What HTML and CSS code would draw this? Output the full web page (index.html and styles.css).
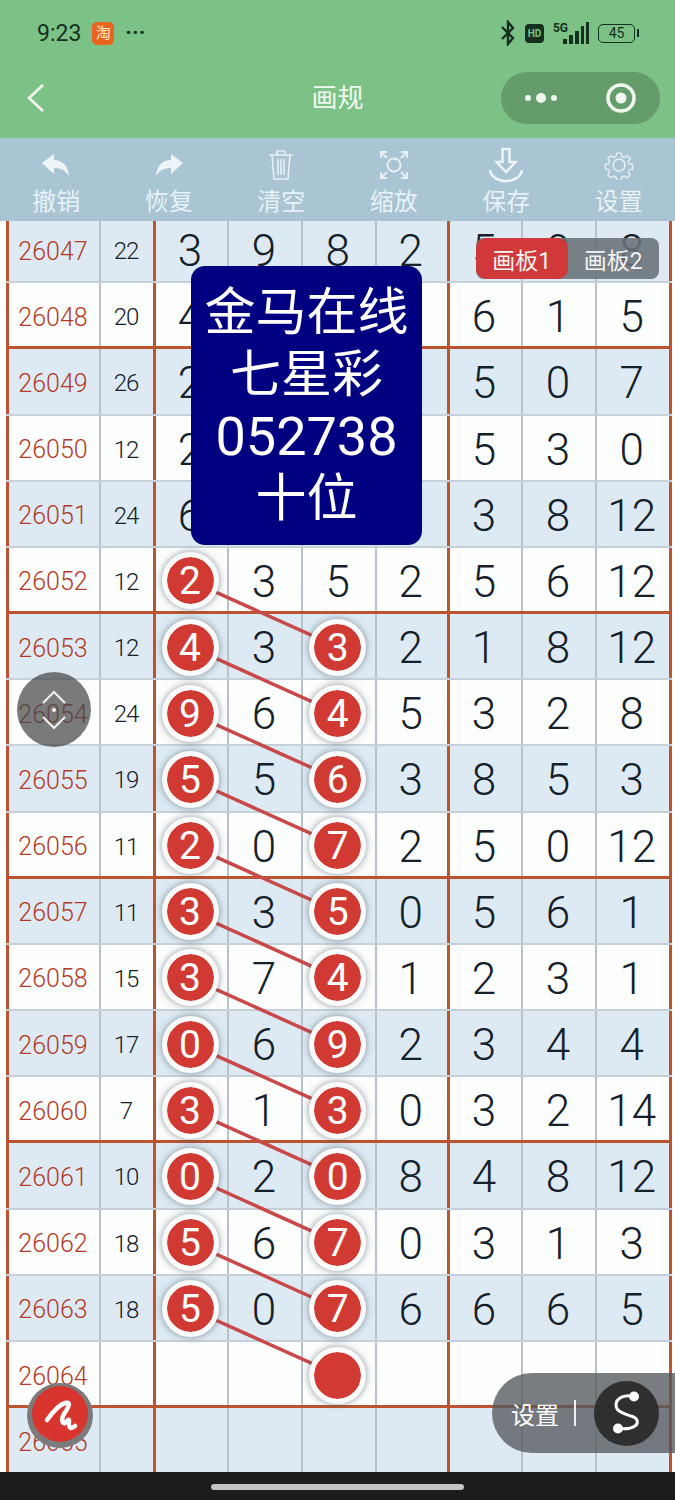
FILE: index.html
```html
<!DOCTYPE html>
<html lang="zh-CN">
<head>
    <meta charset="UTF-8">
    <meta name="viewport" content="width=device-width, initial-scale=1.0">
    <title>画规</title>
    <link rel="stylesheet" href="styles.css">
</head>
<body>

    <div class="top">
        <div class="status">
            <div class="status-left">
                <span class="time">9:23</span>
                <span class="app-badge">淘</span>
                <span class="more-dots">···</span>
            </div>
            <div class="status-right">
                <svg width="16" height="26" viewBox="0 0 16 26"><path d="M2 7l11 11-5 6V2l5 6L2 19" fill="none" stroke="#16301f" stroke-width="2.4"/></svg>
                <span class="hd">HD</span>
                <span class="net">5G</span>
                <svg class="signal" width="28" height="24" viewBox="0 0 28 24"><path d="M1 18h4v5H1zM7 14h4v9H7zM13 10h4v13h-4zM19 5h3v18h-3zM24 1h3v22h-3z" fill="#16301f"/></svg>
                <span class="battery">45</span>
            </div>
        </div>
        <div class="nav">
            <svg class="back" width="20" height="30" viewBox="0 0 20 30"><path d="M17 2L3 15l14 13" fill="none" stroke="#f4faf4" stroke-width="2.6"/></svg>
            <div class="title">画规</div>
            <div class="capsule">
                <svg width="40" height="14" viewBox="0 0 40 14"><circle cx="7" cy="7" r="3" fill="#eef6ee"/><circle cx="20" cy="7" r="5" fill="#eef6ee"/><circle cx="33" cy="7" r="3" fill="#eef6ee"/></svg>
                <svg width="32" height="32" viewBox="0 0 32 32"><circle cx="16" cy="16" r="13" fill="none" stroke="#eef6ee" stroke-width="3.6"/><circle cx="16" cy="16" r="5.5" fill="#eef6ee"/></svg>
            </div>
        </div>
    </div>

    <div class="toolbar">
        <div class="tool">
            <div class="tool-icon"><svg width="30" height="24" viewBox="0 0 30 24"><path d="M1 10L13 1v6c8 0 14 5 15 16-4-6-8-8-15-8v6z" fill="#eef5f8"/></svg></div>
            <span>撤销</span>
        </div>
        <div class="tool">
            <div class="tool-icon"><svg width="30" height="24" viewBox="0 0 30 24"><path d="M29 10L17 1v6C9 7 3 12 2 23c4-6 8-8 15-8v6z" fill="#eef5f8"/></svg></div>
            <span>恢复</span>
        </div>
        <div class="tool">
            <div class="tool-icon"><svg width="26" height="32" viewBox="0 0 26 32" fill="none" stroke="#e6f0f4" stroke-width="1.6"><path d="M1 6h24M9 6V2h8v4M4 6l2 24h14l2-24M10 10v16M13 10v16M16 10v16"/></svg></div>
            <span>清空</span>
        </div>
        <div class="tool">
            <div class="tool-icon"><svg width="30" height="30" viewBox="0 0 30 30" fill="none" stroke="#e6f0f4" stroke-width="2"><circle cx="15" cy="15" r="6.5"/><path d="M2 8V2h6M2 2l6 6M22 2h6v6M28 2l-6 6M2 22v6h6M2 28l6-6M28 22v6h-6M28 28l-6-6"/></svg></div>
            <span>缩放</span>
        </div>
        <div class="tool">
            <div class="tool-icon"><svg width="36" height="36" viewBox="0 0 36 36" fill="none" stroke="#eef5f8" stroke-width="2.4"><path d="M14.5 2h7v13h6L18 25 8.500 15h6zM2 23c1 7 8 11 16 11s15-4 16-11"/></svg></div>
            <span>保存</span>
        </div>
        <div class="tool">
            <div class="tool-icon"><svg width="30" height="30" viewBox="0 0 30 30" fill="none" stroke="#e6f0f4" stroke-width="1.5"><circle cx="15" cy="15" r="6"/><path d="M12.500 1.500h5l.8 3.800 2.600 1.100 3.300-2.100 3.500 3.500-2.100 3.300 1.100 2.600 3.800.8v5l-3.800.8-1.100 2.600 2.100 3.300-3.500 3.500-3.300-2.100-2.600 1.100-.8 3.800h-5l-.8-3.800-2.600-1.100-3.300 2.100-3.500-3.500 2.100-3.300-1.100-2.600-3.800-.8v-5l3.800-.8 1.100-2.600-2.100-3.300 3.500-3.500 3.300 2.100 2.600-1.100z" transform="translate(1.800 1.800) scale(.88)"/></svg></div>
            <span>设置</span>
        </div>
    </div>

    <div class="board">
        <div class="rows">
            <div class="row alt"><div class="cell id">26047</div><div class="cell sum">22</div><div class="cell sep">3</div><div class="cell">9</div><div class="cell">8</div><div class="cell">2</div><div class="cell sep">5</div><div class="cell">0</div><div class="cell">8</div></div>
            <div class="row major"><div class="cell id">26048</div><div class="cell sum">20</div><div class="cell sep">4</div><div class="cell"></div><div class="cell"></div><div class="cell"></div><div class="cell sep">6</div><div class="cell">1</div><div class="cell">5</div></div>
            <div class="row alt"><div class="cell id">26049</div><div class="cell sum">26</div><div class="cell sep">2</div><div class="cell"></div><div class="cell"></div><div class="cell"></div><div class="cell sep">5</div><div class="cell">0</div><div class="cell">7</div></div>
            <div class="row"><div class="cell id">26050</div><div class="cell sum">12</div><div class="cell sep">2</div><div class="cell"></div><div class="cell"></div><div class="cell"></div><div class="cell sep">5</div><div class="cell">3</div><div class="cell">0</div></div>
            <div class="row alt"><div class="cell id">26051</div><div class="cell sum">24</div><div class="cell sep">6</div><div class="cell"></div><div class="cell"></div><div class="cell"></div><div class="cell sep">3</div><div class="cell">8</div><div class="cell">12</div></div>
            <div class="row major"><div class="cell id">26052</div><div class="cell sum">12</div><div class="cell sep"><span class="ball">2</span></div><div class="cell">3</div><div class="cell">5</div><div class="cell">2</div><div class="cell sep">5</div><div class="cell">6</div><div class="cell">12</div></div>
            <div class="row alt"><div class="cell id">26053</div><div class="cell sum">12</div><div class="cell sep"><span class="ball">4</span></div><div class="cell">3</div><div class="cell"><span class="ball">3</span></div><div class="cell">2</div><div class="cell sep">1</div><div class="cell">8</div><div class="cell">12</div></div>
            <div class="row"><div class="cell id">26054</div><div class="cell sum">24</div><div class="cell sep"><span class="ball">9</span></div><div class="cell">6</div><div class="cell"><span class="ball">4</span></div><div class="cell">5</div><div class="cell sep">3</div><div class="cell">2</div><div class="cell">8</div></div>
            <div class="row alt"><div class="cell id">26055</div><div class="cell sum">19</div><div class="cell sep"><span class="ball">5</span></div><div class="cell">5</div><div class="cell"><span class="ball">6</span></div><div class="cell">3</div><div class="cell sep">8</div><div class="cell">5</div><div class="cell">3</div></div>
            <div class="row major"><div class="cell id">26056</div><div class="cell sum">11</div><div class="cell sep"><span class="ball">2</span></div><div class="cell">0</div><div class="cell"><span class="ball">7</span></div><div class="cell">2</div><div class="cell sep">5</div><div class="cell">0</div><div class="cell">12</div></div>
            <div class="row alt"><div class="cell id">26057</div><div class="cell sum">11</div><div class="cell sep"><span class="ball">3</span></div><div class="cell">3</div><div class="cell"><span class="ball">5</span></div><div class="cell">0</div><div class="cell sep">5</div><div class="cell">6</div><div class="cell">1</div></div>
            <div class="row"><div class="cell id">26058</div><div class="cell sum">15</div><div class="cell sep"><span class="ball">3</span></div><div class="cell">7</div><div class="cell"><span class="ball">4</span></div><div class="cell">1</div><div class="cell sep">2</div><div class="cell">3</div><div class="cell">1</div></div>
            <div class="row alt"><div class="cell id">26059</div><div class="cell sum">17</div><div class="cell sep"><span class="ball">0</span></div><div class="cell">6</div><div class="cell"><span class="ball">9</span></div><div class="cell">2</div><div class="cell sep">3</div><div class="cell">4</div><div class="cell">4</div></div>
            <div class="row major"><div class="cell id">26060</div><div class="cell sum">7</div><div class="cell sep"><span class="ball">3</span></div><div class="cell">1</div><div class="cell"><span class="ball">3</span></div><div class="cell">0</div><div class="cell sep">3</div><div class="cell">2</div><div class="cell">14</div></div>
            <div class="row alt"><div class="cell id">26061</div><div class="cell sum">10</div><div class="cell sep"><span class="ball">0</span></div><div class="cell">2</div><div class="cell"><span class="ball">0</span></div><div class="cell">8</div><div class="cell sep">4</div><div class="cell">8</div><div class="cell">12</div></div>
            <div class="row"><div class="cell id">26062</div><div class="cell sum">18</div><div class="cell sep"><span class="ball">5</span></div><div class="cell">6</div><div class="cell"><span class="ball">7</span></div><div class="cell">0</div><div class="cell sep">3</div><div class="cell">1</div><div class="cell">3</div></div>
            <div class="row alt"><div class="cell id">26063</div><div class="cell sum">18</div><div class="cell sep"><span class="ball">5</span></div><div class="cell">0</div><div class="cell"><span class="ball">7</span></div><div class="cell">6</div><div class="cell sep">6</div><div class="cell">6</div><div class="cell">5</div></div>
            <div class="row major"><div class="cell id">26064</div><div class="cell sum"></div><div class="cell sep"></div><div class="cell"></div><div class="cell"><span class="ball"></span></div><div class="cell"></div><div class="cell sep"></div><div class="cell"></div><div class="cell"></div></div>
            <div class="row alt"><div class="cell id">26065</div><div class="cell sum"></div><div class="cell sep"></div><div class="cell"></div><div class="cell"></div><div class="cell"></div><div class="cell sep"></div><div class="cell"></div><div class="cell"></div></div>
        </div>

        <!-- lines between the balls, one per drawn row -->
        <svg class="links" width="675" height="1251" viewBox="0 0 675 1251">
            <g stroke="#c8494a" stroke-width="3.500">
                <line x1="191" y1="360" x2="338" y2="426.200"/>
                <line x1="191" y1="426.200" x2="338" y2="492.400"/>
                <line x1="191" y1="492.400" x2="338" y2="558.500"/>
                <line x1="191" y1="558.500" x2="338" y2="624.700"/>
                <line x1="191" y1="624.700" x2="338" y2="690.900"/>
                <line x1="191" y1="690.900" x2="338" y2="757.100"/>
                <line x1="191" y1="757.100" x2="338" y2="823.300"/>
                <line x1="191" y1="823.300" x2="338" y2="889.400"/>
                <line x1="191" y1="889.400" x2="338" y2="955.600"/>
                <line x1="191" y1="955.600" x2="338" y2="1021.800"/>
                <line x1="191" y1="1021.800" x2="338" y2="1088"/>
                <line x1="191" y1="1088" x2="338" y2="1154.200"/>
            </g>
        </svg>

        <div class="notice">
            <div>金马在线</div>
            <div>七星彩</div>
            <div class="notice-num">052738</div>
            <div>十位</div>
        </div>

        <div class="tabs">
            <span class="tab tab-on">画板1</span>
            <span class="tab">画板2</span>
        </div>

        <div class="scroll-btn">
            <svg width="30" height="46" viewBox="0 0 30 46" fill="none" stroke="#f2f2f2" stroke-width="2"><path d="M4 16L15 5l11 11M4 30l11 11 11-11"/><circle cx="15" cy="23" r="2" fill="#f2f2f2" stroke="none"/></svg>
        </div>

        <div class="pen-btn">
            <div class="pen-inner">
                <svg width="56" height="56" viewBox="0 0 56 56" fill="none" stroke="#fff" stroke-width="4.500" stroke-linecap="round" stroke-linejoin="round"><path d="M15 34C20 27 26 19 33 17 40 15 36 22 32 28 29 33 30 38 33 37 36 35 36 33 37 34 37 37 36 41 39 42 41 42 42 41 43 40"/></svg>
            </div>
        </div>

        <div class="float-pill">
            <span class="float-label">设置</span>
            <span class="float-rule"></span>
            <div class="float-circle">
                <svg width="40" height="50" viewBox="0 0 40 50" fill="none" stroke="#fff" stroke-width="3"><path d="M27 8.500C18 6 9 10 9 17 9 24 18 26 24 28 31 30 32 35 28 38 24 41 16 41 11 40.500"/><circle cx="27" cy="8.500" r="3.500" fill="#fff"/><circle cx="11" cy="40.500" r="3.500" fill="#fff"/></svg>
            </div>
        </div>
    </div>

    <div class="home-bar"><span class="handle"></span></div>

</body>
</html>
```
FILE: styles.css
```css
* {
    box-sizing: border-box;
}
body {
    margin: 0;
    width: 675px;
    height: 1500px;
    overflow: hidden;
    display: flex;
    flex-direction: column;
    background: #fff;
    font-family: Roboto, "Noto Sans CJK SC", sans-serif;
}

/* green header */
.top {
    height: 138px;
    background-color: #7cc286;
}
.status {
    height: 66px;
    display: flex;
    justify-content: space-between;
    align-items: center;
    padding: 0 40px 0 37px;
}
.status-left, .status-right {
    display: flex;
    align-items: center;
}
.time {
    font-size: 23px;
    color: #16301f;
}
.app-badge {
    width: 22px;
    height: 23px;
    margin-left: 11px;
    border-radius: 5px;
    background-color: #e8651f;
    color: #fde9c8;
    font-size: 15px;
    line-height: 23px;
    text-align: center;
}
.more-dots {
    margin-left: 11px;
    font-size: 22px;
    font-weight: bold;
    color: #16301f;
    line-height: 20px;
}
.hd {
    width: 19px;
    height: 19px;
    margin-left: 9px;
    border-radius: 4px;
    background-color: #16301f;
    color: #7cc286;
    font-size: 10px;
    font-weight: bold;
    line-height: 19px;
    text-align: center;
}
.net {
    margin-left: 9px;
    margin-top: -10px;
    font-size: 12px;
    font-weight: bold;
    color: #16301f;
}
.signal {
    margin-left: -6px;
}
.battery {
    position: relative;
    width: 37px;
    height: 19px;
    margin-left: 8px;
    border: 1.5px solid #16301f;
    border-radius: 5px;
    color: #16301f;
    font-size: 14px;
    line-height: 16px;
    text-align: center;
}
.battery::after {
    content: "";
    position: absolute;
    right: -5px;
    top: 4px;
    width: 2px;
    height: 8px;
    background-color: #16301f;
}
.nav {
    height: 72px;
    position: relative;
    display: flex;
    align-items: center;
    justify-content: space-between;
    padding: 0 15px 8px 26px;
}
.title {
    position: absolute;
    left: 0;
    right: 0;
    top: 14px;
    text-align: center;
    color: #f1f8f1;
    font-size: 26px;
    line-height: 36px;
}
.capsule {
    width: 159px;
    height: 52px;
    border-radius: 26px;
    background-color: #649d6b;
    display: flex;
    align-items: center;
    justify-content: space-between;
    padding: 0 23px 0 20px;
}

/* tool row */
.toolbar {
    height: 83px;
    display: grid;
    grid-template-columns: repeat(6, 1fr);
    background-color: #a9c5d3;
    padding-top: 8px;
}
.tool {
    display: flex;
    flex-direction: column;
    align-items: center;
    color: #e8f1f5;
    font-size: 24px;
    line-height: 38px;
}
.tool-icon {
    height: 37px;
    display: flex;
    align-items: center;
    justify-content: center;
}

/* number board */
.board {
    position: relative;
    height: 1251px;
    overflow: hidden;
}
.rows {
    margin-top: -4px;
    padding-left: 6px;
}
.row {
    position: relative;
    height: 66.18px;
    display: grid;
    grid-template-columns: 93px 54px 74px 74px 73.5px 72.5px 74px 74px 76.5px;
    width: 665.5px;
    background-color: #fcfdfd;
}
.row::after {
    content: "";
    position: absolute;
    left: 0;
    right: 0;
    bottom: 0;
    height: 2px;
    background-color: #c6d0d8;
}
.row.major::after {
    height: 3px;
    background-color: #bc5430;
}
.row.alt {
    background-color: #deeaf3;
}
.cell {
    display: flex;
    align-items: center;
    justify-content: center;
    padding-top: 2px;
    font-size: 44px;
    font-weight: 300;
    color: #14202a;
    box-shadow: inset 2px 0 0 #b9c2c9;
}
.cell:last-child {
    padding-right: 3px;
    box-shadow: inset 2px 0 0 #b9c2c9, inset -3px 0 0 #bc5430;
}
.cell.sep {
    box-shadow: inset 3px 0 0 #bc5430;
}
.cell.id {
    font-size: 25px;
    font-weight: 300;
    color: #b33a28;
    padding-left: 1px;
    box-shadow: inset 3px 0 0 #bc5430;
}
.cell.sum {
    font-size: 24px;
    font-weight: 300;
    letter-spacing: -1px;
}
.ball {
    position: relative;
    z-index: 2;
    width: 57px;
    height: 57px;
    margin-top: -2px;
    border-radius: 50%;
    border: 5px solid #fbfbfb;
    background-color: #d03a33;
    box-shadow: 0 0 7px rgba(60, 80, 90, .6);
    color: #fff;
    font-size: 39px;
    font-weight: 400;
    line-height: 49px;
    text-align: center;
    background-clip: padding-box;
}
.links {
    position: absolute;
    left: 0;
    top: 0;
    z-index: 1;
}

/* things lying over the board */
.notice {
    position: absolute;
    z-index: 5;
    left: 191px;
    top: 45px;
    width: 231px;
    height: 279px;
    padding-top: 16px;
    border-radius: 14px;
    background-color: #000080;
    color: #fff;
    font-size: 51px;
    line-height: 62px;
    text-align: center;
}
.notice-num {
    font-size: 54px;
}
.tabs {
    position: absolute;
    z-index: 6;
    left: 476px;
    top: 17px;
    width: 183px;
    height: 41px;
    display: flex;
    border-radius: 8px;
    background-color: rgba(105, 112, 120, .88);
}
.tab {
    width: 92px;
    height: 41px;
    color: #f3f3f3;
    font-size: 23px;
    line-height: 47px;
    text-align: center;
}
.tab-on {
    background-color: #d1383a;
    border-radius: 10px;
}
.scroll-btn {
    position: absolute;
    z-index: 6;
    left: 17px;
    top: 451px;
    width: 74px;
    height: 75px;
    border-radius: 50%;
    background-color: rgba(70, 70, 70, .72);
    display: flex;
    align-items: center;
    justify-content: center;
}
.pen-btn {
    position: absolute;
    z-index: 6;
    left: 27px;
    top: 1162px;
    width: 66px;
    height: 65px;
    padding-bottom: 4px;
    border-radius: 50%;
    background-color: #7b7b7b;
    display: flex;
    align-items: center;
    justify-content: center;
}
.pen-inner {
    width: 56px;
    height: 56px;
    border-radius: 50%;
    background-color: #d9352f;
}
.float-pill {
    position: absolute;
    z-index: 6;
    left: 492px;
    top: 1152px;
    width: 183px;
    height: 80px;
    border-radius: 40px 0 0 40px;
    background-color: rgba(84, 88, 92, .78);
    display: flex;
    align-items: center;
    padding-left: 19px;
    color: #fff;
    font-size: 24px;
}
.float-rule {
    width: 2px;
    height: 26px;
    margin-left: 15px;
    background-color: #f0f0f0;
}
.float-circle {
    width: 65px;
    height: 65px;
    margin-left: 18px;
    border-radius: 50%;
    background-color: rgba(42, 42, 44, .94);
    display: flex;
    align-items: center;
    justify-content: center;
}
.home-bar {
    flex: 1;
    background-color: #1c1c1c;
    padding-top: 12px;
}
.handle {
    display: block;
    width: 253px;
    height: 6px;
    margin-left: 211px;
    border-radius: 3px;
    background-color: #c4c4c4;
}
```
